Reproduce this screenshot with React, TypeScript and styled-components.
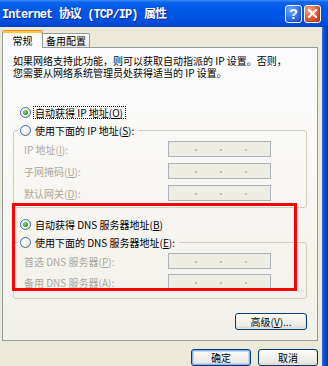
import React from "react";
import styled, { createGlobalStyle } from "styled-components";

const Global = createGlobalStyle`
  html, body {
    margin: 0;
    padding: 0;
    width: 328px;
    height: 366px;
    overflow: hidden;
    background: #ECE9D8;
  }
  body {
    font-family: "Noto Sans CJK SC", "Noto Sans", sans-serif;
    font-size: 10px;
    color: #000;
  }
  * { box-sizing: border-box; }
`;

const Window = styled.div`
  width: 328px;
  height: 366px;
  display: flex;
  flex-direction: column;
  background: #ECE9D8;
  overflow: hidden;
`;

const TitleBar = styled.div`
  height: 27px;
  flex: none;
  display: flex;
  align-items: center;
  justify-content: space-between;
  padding: 0 7px 0 2px;
  background: linear-gradient(
    to bottom,
    #3C8EF7 0px,
    #0F66EC 2px,
    #0059E8 7px,
    #0055E3 17px,
    #004BD8 23px,
    #0040C8 27px
  );
`;

const TitleText = styled.div`
  font-family: "Liberation Mono", "Noto Sans CJK SC", monospace;
  font-weight: bold;
  font-size: 12px;
  letter-spacing: -0.9px;
  color: #fff;
  text-shadow: 1px 1px 0 #0B2A9A;
  white-space: nowrap;
  margin-top: -1px;
`;

const TitleButtons = styled.div`
  display: flex;
  gap: 2px;
  align-items: center;
`;

const CaptionButton = styled.div<{ $kind: "help" | "close" }>`
  width: 17px;
  height: 18px;
  border: 1px solid #fff;
  border-radius: 3px;
  display: flex;
  align-items: center;
  justify-content: center;
  color: #fff;
  font-family: "Liberation Sans", Arial, sans-serif;
  font-weight: bold;
  font-size: 14px;
  line-height: 1;
  background: ${(p) =>
    p.$kind === "help"
      ? "radial-gradient(circle at 30% 25%, #6FA6FF 0%, #2F6FEA 55%, #1B4FD0 100%)"
      : "radial-gradient(circle at 30% 25%, #F2A486 0%, #DD5B36 55%, #C13A16 100%)"};
  box-shadow: inset -1px -1px 0 rgba(0, 0, 0, 0.2);
`;

const Frame = styled.div`
  flex: 1;
  display: flex;
  min-height: 0;
`;

const Client = styled.div`
  flex: 1;
  display: flex;
  flex-direction: column;
  padding: 3px 4px 0 2px;
`;

const RightEdge = styled.div`
  width: 6px;
  flex: none;
  background: linear-gradient(to right, #2A72EE 0px, #0A52DC 2px, #0543C9 4px, #00309E 6px);
`;

const TabStrip = styled.div`
  height: 17px;
  display: flex;
  align-items: flex-end;
  position: relative;
  z-index: 1;
`;

const Tab = styled.div<{ $active?: boolean; $w: number }>`
  width: ${(p) => p.$w}px;
  height: ${(p) => (p.$active ? 18 : 14)}px;
  margin-bottom: ${(p) => (p.$active ? -1 : 0)}px;
  border: 1px solid #919B9C;
  border-bottom: none;
  border-left: ${(p) => (p.$active ? "1px solid #919B9C" : "none")};
  border-top: ${(p) => (p.$active ? "1px solid #E68B2C" : "1px solid #919B9C")};
  border-radius: ${(p) => (p.$active ? "3px 3px 0 0" : "0 2px 0 0")};
  background: ${(p) =>
    p.$active ? "#FCFCFE" : "linear-gradient(to bottom, #FFFFFF, #ECEBE6)"};
  box-shadow: ${(p) => (p.$active ? "inset 0 2px 0 #FFC73C" : "none")};
  display: flex;
  align-items: center;
  justify-content: center;
  padding-top: ${(p) => (p.$active ? 1 : 0)}px;
  white-space: nowrap;
`;

const TabPanel = styled.div`
  height: 294px;
  flex: none;
  border: 1px solid #919B9C;
  background: linear-gradient(to bottom, #FCFCFE 0%, #F7F6F2 50%, #F1F0EA 100%);
  display: flex;
  flex-direction: column;
`;

const Intro = styled.p`
  margin: 7px 0 0 10px;
  line-height: 12px;
  white-space: nowrap;
`;

const RadioRow = styled.div<{ $top: number }>`
  height: 13px;
  margin-top: ${(p) => p.$top}px;
  margin-left: 17px;
  display: flex;
  align-items: center;
  gap: 2px;
  white-space: nowrap;
`;

const RadioMark = styled.span<{ $checked?: boolean }>`
  width: 11px;
  height: 11px;
  flex: none;
  border-radius: 50%;
  border: 1px solid #3D6C9E;
  background: radial-gradient(circle at 35% 35%, #FFFFFF 0%, #F3F2EC 55%, #D6D3C6 100%);
  display: flex;
  align-items: center;
  justify-content: center;
  &::after {
    content: "";
    display: ${(p) => (p.$checked ? "block" : "none")};
    width: 5px;
    height: 5px;
    border-radius: 50%;
    background: radial-gradient(circle at 35% 35%, #7EE07E 0%, #2DA82D 60%, #178A17 100%);
  }
`;

const RadioLabel = styled.span<{ $focused?: boolean }>`
  padding: 0 2px 0 1px;
  line-height: 11px;
  border: 1px dotted ${(p) => (p.$focused ? "#000" : "transparent")};
`;

const GroupBox = styled.div<{ $top: number; $bottom: number }>`
  margin: ${(p) => p.$top}px 10px 0 10px;
  border: 1px solid #D0D0BF;
  border-radius: 3px;
  padding-bottom: ${(p) => p.$bottom}px;
  display: flex;
  flex-direction: column;
`;

const Legend = styled.div<{ $bg: string }>`
  align-self: flex-start;
  height: 13px;
  margin: -7px 0 0 4px;
  padding: 0 1px 0 2px;
  background: ${(p) => p.$bg};
  display: flex;
  align-items: center;
  gap: 2px;
  white-space: nowrap;
`;

const Fields = styled.div<{ $gap: number }>`
  margin-top: 4px;
  display: flex;
  flex-direction: column;
  gap: ${(p) => p.$gap}px;
`;

const FieldRow = styled.div`
  height: 16px;
  display: grid;
  grid-template-columns: 1fr 103px;
  align-items: center;
  padding: 0 35px 0 10px;
  color: #ACA899;
  white-space: nowrap;
`;

const IpBox = styled.div`
  width: 103px;
  height: 16px;
  border: 1px solid #A9B1BA;
  background: #EEEDE3;
  display: flex;
  align-items: center;
  padding: 2px 0 0 26px;
  gap: 23px;
`;

const IpDot = styled.span`
  width: 2px;
  height: 2px;
  background: #C3C0B1;
`;

const DnsSection = styled.div`
  position: relative;
  display: flex;
  flex-direction: column;
`;

const Highlight = styled.div`
  position: absolute;
  left: 9px;
  top: -5px;
  width: 285px;
  height: 88px;
  border: 3px solid #FF0000;
  pointer-events: none;
  z-index: 2;
`;

const PanelFooter = styled.div`
  display: flex;
  justify-content: flex-end;
  padding-right: 10px;
  margin-top: 14px;
`;

const Button = styled.div<{ $w: number; $default?: boolean }>`
  width: ${(p) => p.$w}px;
  height: 17px;
  border: 1px solid #003C74;
  border-radius: 3px;
  background: linear-gradient(to bottom, #FFFFFF 0%, #F4F3EE 40%, #ECEBE6 80%, #D6D0C5 100%);
  box-shadow: ${(p) =>
    p.$default
      ? "inset 0 0 0 1px #8AB0EE, inset 0 0 0 2px #C6D8F7"
      : "inset -1px -1px 0 #E3E0D6"};
  display: flex;
  align-items: center;
  justify-content: center;
  white-space: nowrap;
  line-height: 1;
`;

const DialogButtons = styled.div`
  display: flex;
  justify-content: flex-end;
  gap: 7px;
  margin-top: 8px;
`;

const IpField = () => (
  <IpBox>
    <IpDot />
    <IpDot />
    <IpDot />
  </IpBox>
);

export default function App() {
  return (
    <>
      <Global />
      <Window>
        <TitleBar>
          <TitleText>Internet 协议 (TCP/IP) 属性</TitleText>
          <TitleButtons>
            <CaptionButton $kind="help">?</CaptionButton>
            <CaptionButton $kind="close">
              <svg width="9" height="9" viewBox="0 0 9 9">
                <path d="M1 1 L8 8 M8 1 L1 8" stroke="#fff" strokeWidth="2" strokeLinecap="square" />
              </svg>
            </CaptionButton>
          </TitleButtons>
        </TitleBar>
        <Frame>
          <Client>
            <TabStrip>
              <Tab $active $w={41}>常规</Tab>
              <Tab $w={47}>备用配置</Tab>
            </TabStrip>
            <TabPanel>
              <Intro>
                如果网络支持此功能，则可以获取自动指派的 IP 设置。否则，
                <br />
                您需要从网络系统管理员处获得适当的 IP 设置。
              </Intro>

              <RadioRow $top={27}>
                <RadioMark $checked />
                <RadioLabel $focused>
                  自动获得 IP 地址(<u>O</u>)
                </RadioLabel>
              </RadioRow>

              <GroupBox $top={11} $bottom={6}>
                <Legend $bg="#F9F9F7">
                  <RadioMark />
                  <RadioLabel>
                    使用下面的 IP 地址(<u>S</u>):
                  </RadioLabel>
                </Legend>
                <Fields $gap={6}>
                  <FieldRow>
                    <span>
                      IP 地址(<u>I</u>):
                    </span>
                    <IpField />
                  </FieldRow>
                  <FieldRow>
                    <span>
                      子网掩码(<u>U</u>):
                    </span>
                    <IpField />
                  </FieldRow>
                  <FieldRow>
                    <span>
                      默认网关(<u>D</u>):
                    </span>
                    <IpField />
                  </FieldRow>
                </Fields>
              </GroupBox>

              <DnsSection>
                <Highlight />
                <RadioRow $top={10}>
                  <RadioMark $checked />
                  <RadioLabel>
                    自动获得 DNS 服务器地址(<u>B</u>)
                  </RadioLabel>
                </RadioRow>
                <GroupBox $top={11} $bottom={8}>
                  <Legend $bg="#F5F4F0">
                    <RadioMark />
                    <RadioLabel>
                      使用下面的 DNS 服务器地址(<u>E</u>):
                    </RadioLabel>
                  </Legend>
                  <Fields $gap={5}>
                    <FieldRow>
                      <span>
                        首选 DNS 服务器(<u>P</u>):
                      </span>
                      <IpField />
                    </FieldRow>
                    <FieldRow>
                      <span>
                        备用 DNS 服务器(<u>A</u>):
                      </span>
                      <IpField />
                    </FieldRow>
                  </Fields>
                </GroupBox>
              </DnsSection>

              <PanelFooter>
                <Button $w={72}>
                  高级(<u>V</u>)...
                </Button>
              </PanelFooter>
            </TabPanel>
            <DialogButtons>
              <Button $w={60} $default>
                确定
              </Button>
              <Button $w={60}>取消</Button>
            </DialogButtons>
          </Client>
          <RightEdge />
        </Frame>
      </Window>
    </>
  );
}
